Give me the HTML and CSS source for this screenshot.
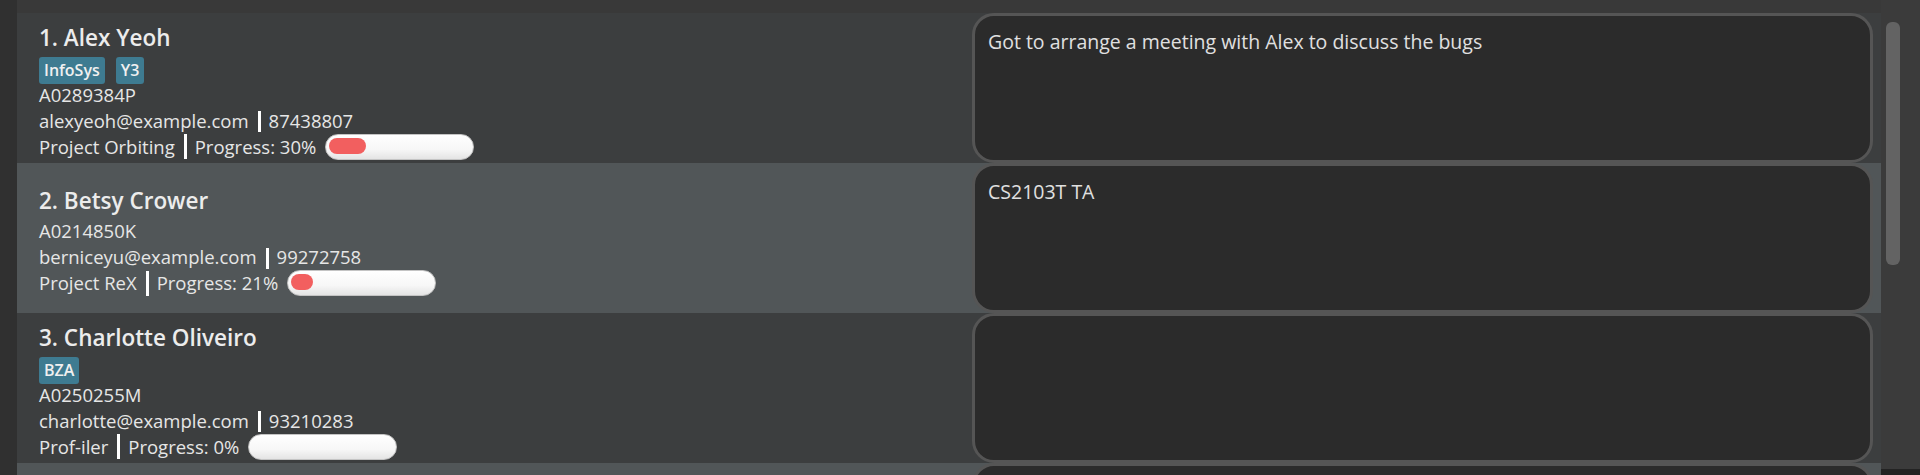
FILE: index.html
```html
<!DOCTYPE html>
<html lang="en">
<head>
<meta charset="utf-8">
<title>Person list</title>
<link rel="stylesheet" href="styles.css">
</head>
<body>
<div class="app">
  <div class="gutter"></div>
  <div class="list">
    <div class="row row-even">
      <div class="info">
        <div class="name">1. Alex Yeoh</div>
        <div class="tags"><span class="tag">InfoSys</span><span class="tag">Y3</span></div>
        <div class="line">A0289384P</div>
        <div class="line"><span>alexyeoh@example.com</span><span class="sep"></span><span>87438807</span></div>
        <div class="line"><span>Project Orbiting</span><span class="sep sep-tall"></span><span>Progress: 30%</span><span class="bar"><span class="fill" style="width:37px"></span></span></div>
      </div>
      <div class="note">Got to arrange a meeting with Alex to discuss the bugs</div>
    </div>
    <div class="row row-odd">
      <div class="info">
        <div class="name">2. Betsy Crower</div>
        <div class="line">A0214850K</div>
        <div class="line"><span>berniceyu@example.com</span><span class="sep"></span><span>99272758</span></div>
        <div class="line"><span>Project ReX</span><span class="sep sep-tall"></span><span>Progress: 21%</span><span class="bar"><span class="fill" style="width:22px"></span></span></div>
      </div>
      <div class="note">CS2103T TA</div>
    </div>
    <div class="row row-even">
      <div class="info">
        <div class="name">3. Charlotte Oliveiro</div>
        <div class="tags"><span class="tag">BZA</span></div>
        <div class="line">A0250255M</div>
        <div class="line"><span>charlotte@example.com</span><span class="sep"></span><span>93210283</span></div>
        <div class="line"><span>Prof-iler</span><span class="sep sep-tall"></span><span>Progress: 0%</span><span class="bar"></span></div>
      </div>
      <div class="note"></div>
    </div>
    <div class="row row-odd">
      <div class="info"></div>
      <div class="note"></div>
    </div>
  </div>
  <div class="scroll"><div class="thumb"></div></div>
</div>
</body>
</html>
```

FILE: styles.css
```css
html, body {
  margin: 0;
  padding: 0;
}
body {
  width: 1920px;
  height: 475px;
  overflow: hidden;
  background: #393939;
  font-family: "Open Sans", "Noto Sans", sans-serif;
  color: #e6e6e6;
}
.app {
  display: flex;
  height: 475px;
}
.gutter {
  flex: 0 0 17px;
  background: #303030;
}
.list {
  flex: 0 0 1864px;
  display: flex;
  flex-direction: column;
  padding-top: 13px;
  overflow: hidden;
}
.row {
  flex: 0 0 150px;
  height: 150px;
  display: flex;
  align-items: center;
}
.row-even {
  background: #3c3e3f;
}
.row-odd {
  background: #515658;
}
.info {
  flex: 1 1 auto;
  padding: 6px 0 0 22px;
  display: flex;
  flex-direction: column;
}
.name {
  font-size: 22.5px;
  font-weight: 600;
  line-height: 30px;
  margin-bottom: 2px;
  color: #ececec;
}
.tags {
  display: flex;
  gap: 11px;
  margin: 2px 0 -2px;
}
.tag {
  height: 27px;
  line-height: 27px;
  padding: 0 5px;
  background: #3e7b91;
  border-radius: 3px;
  font-size: 16px;
  font-weight: 600;
  color: #f0f0f0;
}
.line {
  display: flex;
  align-items: center;
  height: 26px;
  font-size: 18.5px;
  line-height: 26px;
  white-space: nowrap;
}
.sep {
  width: 3px;
  height: 21px;
  margin: 2px 8px 0 9px;
  background: #ffffff;
}
.sep-tall {
  height: 25px;
  margin-top: 0;
}
.bar {
  position: relative;
  width: 149px;
  height: 26px;
  margin-left: 9px;
  box-sizing: border-box;
  border: 1px solid #c4c4c4;
  border-radius: 13px;
  background: linear-gradient(#ffffff 0%, #f7f7f7 60%, #e4e4e4 100%);
}
.fill {
  position: absolute;
  left: 3px;
  top: 3px;
  height: 16px;
  border-radius: 8px;
  background: #f25f5f;
}
.note {
  flex: 0 0 901px;
  align-self: stretch;
  box-sizing: border-box;
  margin-right: 8px;
  padding: 13px 13px;
  border: 3px solid #555555;
  border-radius: 22px;
  background: #2b2b2b;
  font-size: 19.5px;
  line-height: 26px;
  color: #e0e0e0;
}
.scroll {
  flex: 1 1 auto;
  background: #3b3b3b;
  padding: 22px 0 0 5px;
  box-sizing: border-box;
  border-bottom: 6px solid #232323;
}
.thumb {
  width: 14px;
  height: 243px;
  border-radius: 6px;
  background: #636363;
}
```
